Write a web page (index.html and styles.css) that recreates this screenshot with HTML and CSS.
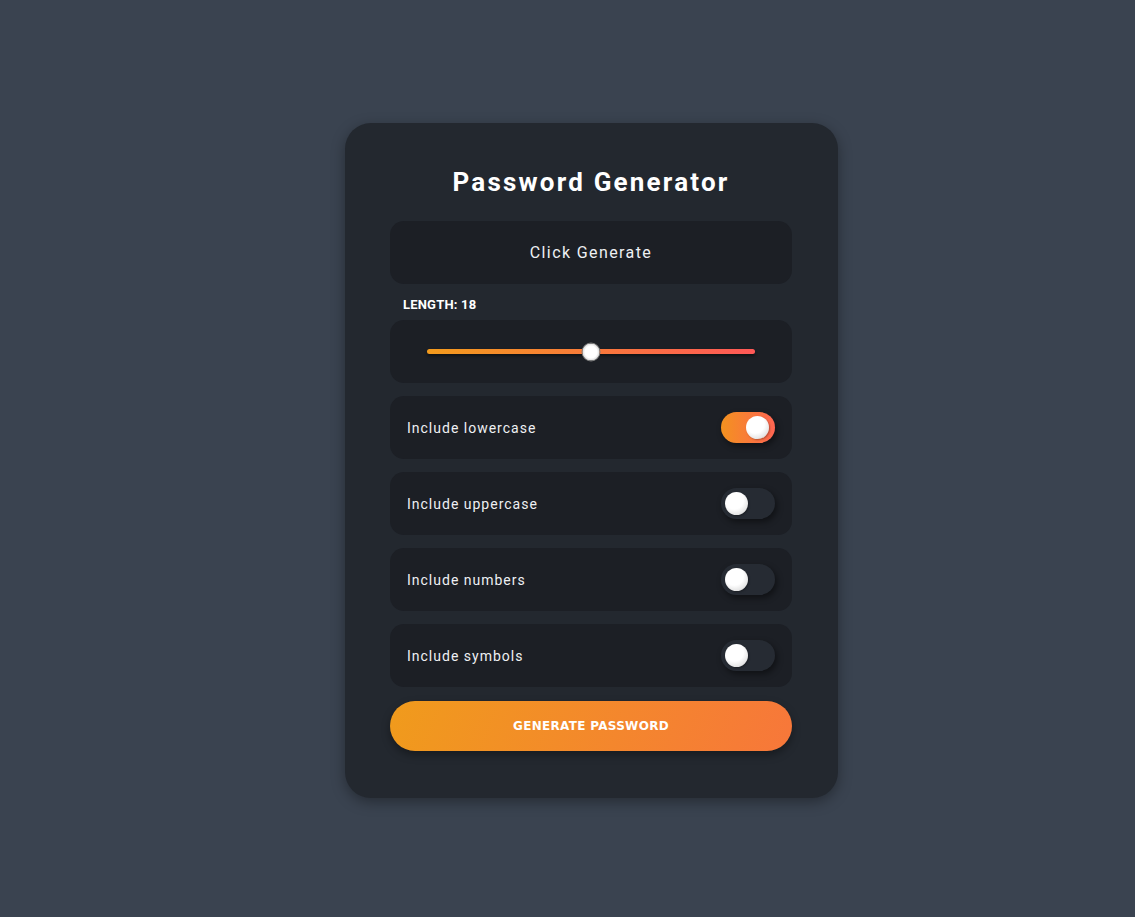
FILE: index.html
```html
<!DOCTYPE html>
<html lang="en">
<head>
<meta charset="utf-8">
<title>Password Generator</title>
<link rel="stylesheet" href="styles.css">
</head>
<body>
<main class="card">
  <h1 class="title">Password Generator</h1>
  <div class="output">Click Generate</div>
  <div class="len-label">LENGTH: 18</div>
  <div class="panel slider-panel">
    <div class="track">
      <span class="thumb" style="left: 50%"></span>
    </div>
  </div>
  <div class="panel option">
    <span class="opt-label">Include lowercase</span>
    <span class="toggle on"><span class="knob"></span></span>
  </div>
  <div class="panel option">
    <span class="opt-label">Include uppercase</span>
    <span class="toggle"><span class="knob"></span></span>
  </div>
  <div class="panel option">
    <span class="opt-label">Include numbers</span>
    <span class="toggle"><span class="knob"></span></span>
  </div>
  <div class="panel option">
    <span class="opt-label">Include symbols</span>
    <span class="toggle"><span class="knob"></span></span>
  </div>
  <button class="generate">GENERATE PASSWORD</button>
</main>
</body>
</html>
```

FILE: styles.css
```css
html, body {
  margin: 0;
  padding: 0;
}
body {
  background: #3a4350;
  min-height: 917px;
  font-family: Roboto, "Noto Sans", sans-serif;
  color: #ffffff;
  display: flex;
  justify-content: center;
  align-items: flex-start;
  padding-left: 48px;
  box-sizing: border-box;
}
.card {
  margin-top: 123px;
  width: 402px;
  padding: 43px 46px 47px 45px;
  background: #23282f;
  border-radius: 26px;
  box-shadow: 0 4px 14px rgba(0, 0, 0, 0.35);
  display: flex;
  flex-direction: column;
}
.title {
  margin: 0;
  text-align: center;
  font-size: 26px;
  font-weight: 700;
  letter-spacing: 2.2px;
  line-height: 32px;
  height: 32px;
}
.output {
  margin-top: 23px;
  height: 63px;
  background: #1c1f25;
  border-radius: 14px;
  display: flex;
  align-items: center;
  justify-content: center;
  font-size: 16px;
  letter-spacing: 1.4px;
  color: #eef0f3;
}
.len-label {
  margin: 12px 0 0 13px;
  font-size: 13px;
  font-weight: 700;
  line-height: 17px;
  letter-spacing: 0.2px;
}
.panel {
  height: 63px;
  background: #1c1f25;
  border-radius: 14px;
  box-sizing: border-box;
}
.slider-panel {
  margin-top: 7px;
  display: flex;
  align-items: center;
  padding: 0 37px;
}
.track {
  position: relative;
  flex: 1;
  height: 5px;
  border-radius: 3px;
  background: linear-gradient(90deg, #f39b1d, #ff5857);
  box-shadow: 0 2px 3px rgba(0, 0, 0, 0.45);
}
.thumb {
  position: absolute;
  top: 50%;
  width: 17px;
  height: 17px;
  border-radius: 50%;
  background: radial-gradient(circle at 50% 50%, #ffffff 50%, #d0d0d0 75%, #9a9a9a 100%);
  border: 1px solid #7d7d7d;
  transform: translate(-50%, -50%);
}
.option {
  margin-top: 13px;
  display: flex;
  align-items: center;
  justify-content: space-between;
  padding: 0 17px;
}
.opt-label {
  font-size: 14px;
  letter-spacing: 1px;
  color: #eef0f3;
  line-height: 16px;
}
.toggle {
  position: relative;
  width: 54px;
  height: 31px;
  border-radius: 16px;
  background: #262b33;
  box-shadow: 2px 3px 6px rgba(0, 0, 0, 0.45);
}
.toggle.on {
  background: linear-gradient(90deg, #f3921f, #ff6552);
}
.knob {
  position: absolute;
  top: 4px;
  left: 4px;
  width: 23px;
  height: 23px;
  border-radius: 50%;
  background: radial-gradient(circle at 40% 35%, #ffffff 45%, #e8e8e8 70%, #bdbdbd 100%);
  box-shadow: 1px 1px 2px rgba(0, 0, 0, 0.3);
}
.toggle.on .knob {
  left: auto;
  right: 6px;
}
.generate {
  margin-top: 14px;
  height: 50px;
  border: none;
  border-radius: 25px;
  background: linear-gradient(110deg, #f09b1c, #f7773a);
  color: #ffffff;
  font-family: "DejaVu Sans", Verdana, sans-serif;
  font-weight: 700;
  font-size: 12px;
  letter-spacing: 0.3px;
  box-shadow: 0 4px 8px rgba(0, 0, 0, 0.35);
}
```
